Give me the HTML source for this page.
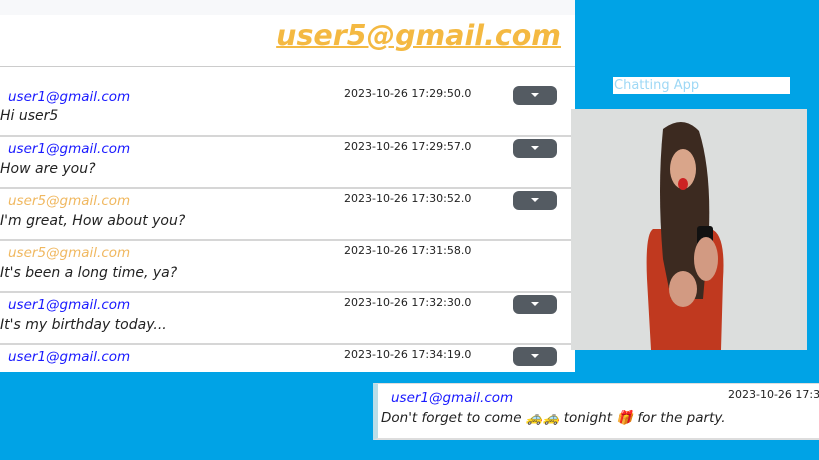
<!DOCTYPE html>
<html><head><meta charset="utf-8"><style>
*{margin:0;padding:0;box-sizing:border-box}
body{width:819px;height:460px;background:#00a3e6;position:relative;overflow:hidden;font-family:"DejaVu Sans",sans-serif}
.left{position:absolute;left:0;top:0;width:575px;height:372px;background:#fff;overflow:hidden}
.top{height:15px;background:#f7f8fa}
.hdr{position:absolute;left:0;top:15px;width:575px;height:52px;border-bottom:1px solid #ccc}
.hdr a{position:absolute;right:14px;top:4px;font-size:28.5px;font-weight:bold;font-style:italic;color:#f4b942;text-decoration:underline;text-decoration-thickness:2px;white-space:nowrap}
.row{position:absolute;left:0;width:575px;height:52px;border-bottom:2px solid #d6d6d6}
.row .u{position:absolute;left:8px;font-size:13.5px;font-style:italic;color:#1a1aff;white-space:nowrap}
.row .u.o{color:#f0b860}
.row .t{position:absolute;left:344px;font-size:11px;color:#222;white-space:nowrap}
.row .m{position:absolute;left:0;font-size:14px;font-style:italic;color:#222;white-space:nowrap}
.row .b{position:absolute;left:513px;width:44px;height:19px;border-radius:6px;background:#545b62}
.row .b:after{content:"";position:absolute;left:18px;top:7px;border:4px solid transparent;border-top:4px solid #fff}
.title{position:absolute;left:613px;top:77px;width:177px;height:17px;background:#fff;color:#9ed8f5;font-size:13px;padding-left:1px;line-height:17px}
.img{position:absolute;left:571px;top:109px;width:236px;height:241px;background:#dcdedd;overflow:hidden}
.bot{position:absolute;left:373px;top:383px;width:446px;height:57px;background:#fff;border-left:5px solid #b9dde8;border-top:1px solid #ddd;border-bottom:2px solid #ddd}
</style></head><body>
<div class="left">
<div class="top"></div>
<div class="hdr"><a>user5@gmail.com</a></div>
<div class="row" style="top:68px;height:69px"><span class="u" style="top:21px">user1@gmail.com</span><span class="t" style="top:19px">2023-10-26 17:29:50.0</span><span class="m" style="top:40px">Hi user5</span><span class="b" style="top:18px"></span></div>
<div class="row" style="top:137px"><span class="u" style="top:4px">user1@gmail.com</span><span class="t" style="top:3px">2023-10-26 17:29:57.0</span><span class="m" style="top:24px">How are you?</span><span class="b" style="top:2px"></span></div>
<div class="row" style="top:189px"><span class="u o" style="top:4px">user5@gmail.com</span><span class="t" style="top:3px">2023-10-26 17:30:52.0</span><span class="m" style="top:24px">I'm great, How about you?</span><span class="b" style="top:2px"></span></div>
<div class="row" style="top:241px"><span class="u o" style="top:4px">user5@gmail.com</span><span class="t" style="top:3px">2023-10-26 17:31:58.0</span><span class="m" style="top:24px">It's been a long time, ya?</span></div>
<div class="row" style="top:293px"><span class="u" style="top:4px">user1@gmail.com</span><span class="t" style="top:3px">2023-10-26 17:32:30.0</span><span class="m" style="top:24px">It's my birthday today...</span><span class="b" style="top:2px"></span></div>
<div class="row" style="top:345px;border:none"><span class="u" style="top:4px">user1@gmail.com</span><span class="t" style="top:3px">2023-10-26 17:34:19.0</span><span class="b" style="top:2px"></span></div>
</div>
<div class="title">Chatting App</div>
<div class="img">
<svg width="236" height="241" viewBox="0 0 236 241">
<path d="M82 120 Q74 125 76 170 L80 241 L150 241 L152 170 Q155 125 140 120 Z" fill="#c0391f"/>
<path d="M92 20 Q112 5 128 22 Q140 60 138 120 L132 190 L100 190 L92 150 Q86 80 92 20Z" fill="#3c2a20"/>
<ellipse cx="112" cy="60" rx="13" ry="20" fill="#d9a58a"/>
<ellipse cx="112" cy="75" rx="5" ry="6" fill="#c22"/>
<rect x="126" y="117" width="16" height="40" rx="3" fill="#111"/>
<ellipse cx="135" cy="150" rx="12" ry="22" fill="#d29a82"/>
<ellipse cx="112" cy="180" rx="14" ry="18" fill="#d29a82"/>
</svg>
</div>
<div class="bot">
<span style="position:absolute;left:13px;top:6px;font-size:13.5px;font-style:italic;color:#1a1aff;white-space:nowrap">user1@gmail.com</span>
<span style="position:absolute;left:350px;top:4px;font-size:11px;color:#222;white-space:nowrap">2023-10-26 17:3</span>
<span style="position:absolute;left:3px;top:26px;font-size:13.5px;font-style:italic;color:#222;white-space:nowrap">Don't forget to come 🚕🚕 tonight 🎁 for the party.</span>
</div>
</body></html>
